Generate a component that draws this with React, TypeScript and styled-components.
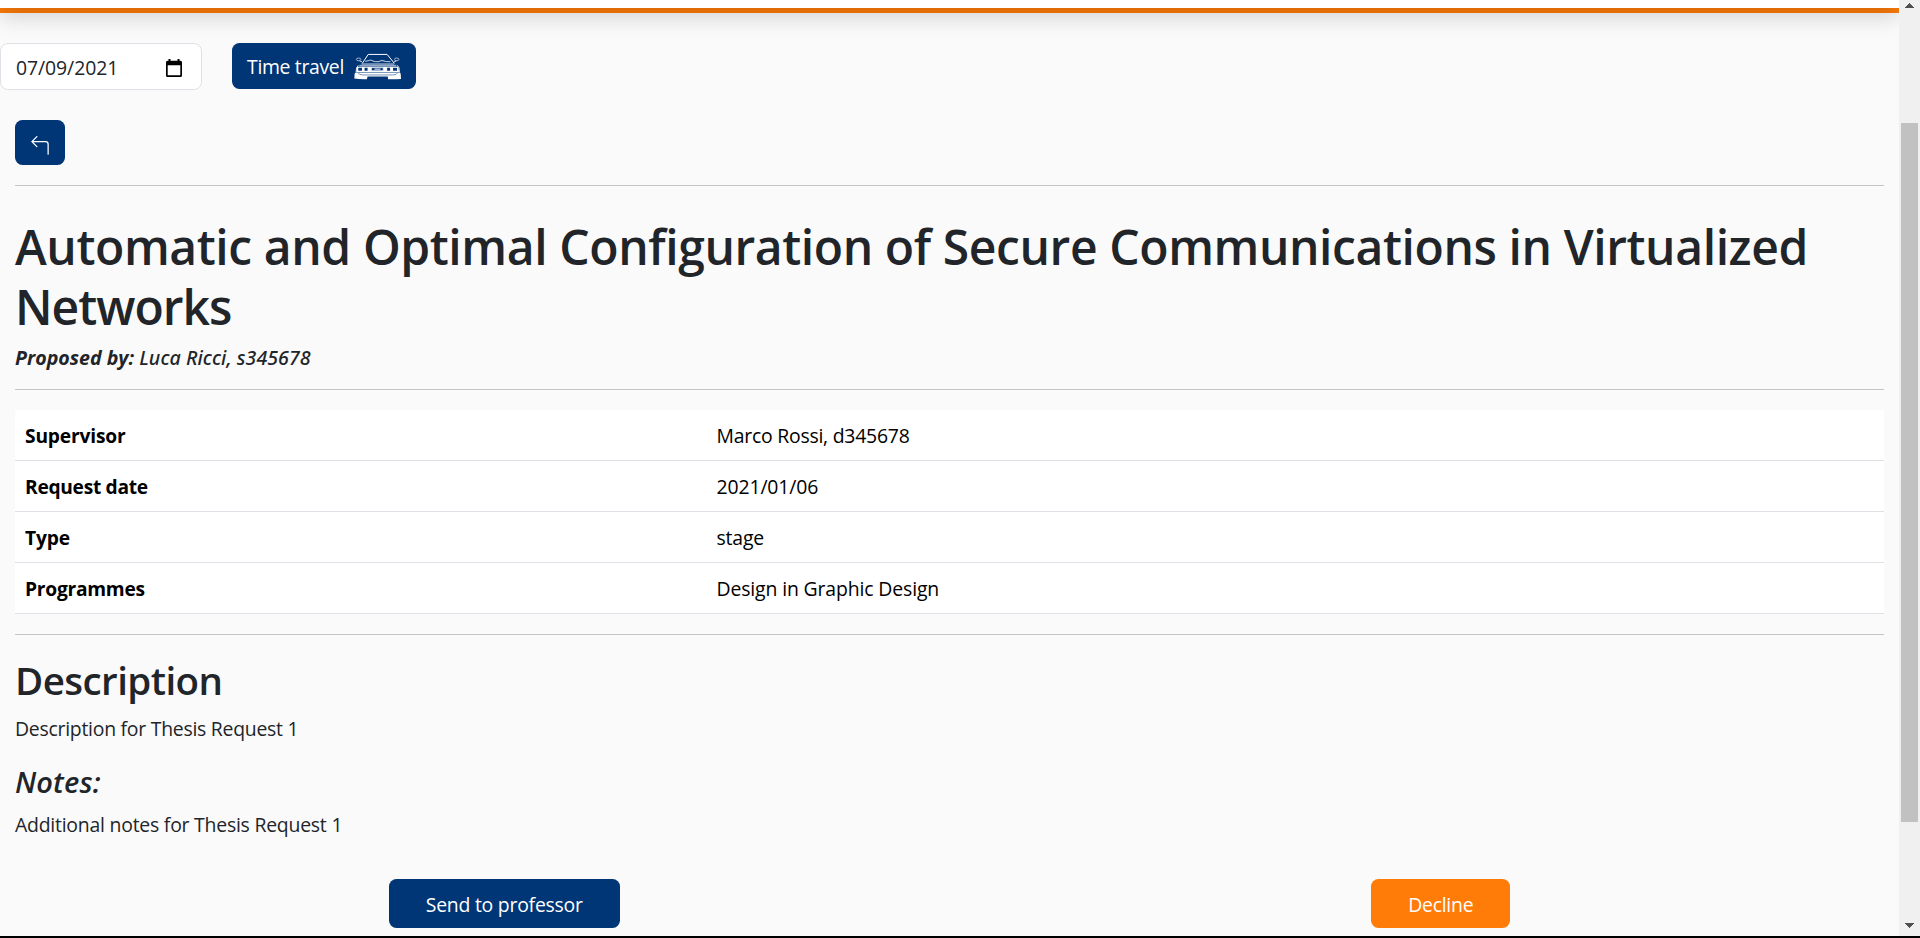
import React from "react";
import styled, { createGlobalStyle } from "styled-components";
import { BsArrow90DegLeft } from "react-icons/bs";

const NAVY = "#003576";
const ORANGE = "#ff7c08";

const GlobalStyle = createGlobalStyle`
  *, *::before, *::after { box-sizing: border-box; }
  body {
    margin: 0;
    overflow: hidden;
    background: #fafafa;
    color: #212529;
    font-family: "Open Sans", "Noto Sans", sans-serif;
    font-size: 19.4px;
    line-height: 31px;
  }
`;

const Window = styled.div`
  display: flex;
  height: 938px;
  overflow: hidden;
  border-bottom: 2px solid #000;
`;

const Page = styled.div`
  flex: 1;
  min-width: 0;
  overflow: hidden;
`;

const Header = styled.header`
  position: relative;
  z-index: 1;
  height: 80px;
  margin-top: -72px;
  background: #fff;
  box-shadow: 0 10px 20px rgba(0, 0, 0, 0.15);
`;

const Stripe = styled.div`
  height: 5px;
  background: ${ORANGE};
`;

const Toolbar = styled.div`
  display: flex;
  align-items: flex-start;
  gap: 30px;
  margin-top: 30px;
`;

const DateField = styled.div`
  display: flex;
  align-items: center;
  justify-content: space-between;
  width: 202px;
  height: 47px;
  padding: 2px 19px 0 15px;
  border: 1px solid #dee2e6;
  border-radius: 8px;
  background: #fff;
`;

const Button = styled.button<{ $tone?: string; $pad?: string; $width: number; $height: number }>`
  display: flex;
  align-items: center;
  justify-content: center;
  width: ${(p) => p.$width}px;
  height: ${(p) => p.$height}px;
  padding: ${(p) => p.$pad ?? "1px 0 0"};
  border: 0;
  border-radius: 7.5px;
  background: ${(p) => p.$tone ?? NAVY};
  color: #fff;
  font: inherit;
  white-space: nowrap;
`;

const Text = styled.span<{ $track?: number }>`
  letter-spacing: ${(p) => p.$track ?? 0}px;
  white-space: nowrap;
`;

const Content = styled.main`
  padding: 30px 15px 0;
`;

const Rule = styled.hr<{ $gap: number }>`
  height: 1px;
  margin: ${(p) => p.$gap}px 0 0;
  border: 0;
  background: #c4c5c6;
`;

const Title = styled.h1`
  margin: 30.5px 0 0;
  font-size: 48px;
  font-weight: 600;
  line-height: 60px;
`;

const TitleLine = styled(Text)`
  display: block;
`;

const Proposer = styled.p`
  margin: 5.5px 0 0;
  font-size: 19.6px;
  font-style: italic;
`;

const ProposerName = styled(Text)`
  font-family: "Noto Sans", sans-serif;
  font-weight: 500;
`;

const Details = styled.dl`
  margin: 20px 0 0;
  background: #fff;
  color: #000;
`;

const DetailRow = styled.div`
  display: grid;
  grid-template-columns: 37% 1fr;
  height: 51px;
  padding-top: 10px;
  border-bottom: 1px solid #dee2e6;
`;

const Label = styled.dt`
  padding-left: 10px;
  font-size: 19.2px;
  font-weight: 700;
`;

const Value = styled.dd`
  margin: 0;
  padding-left: 10px;
`;

const SectionTitle = styled.h2`
  margin: 19px 0 0;
  font-size: 38.5px;
  font-weight: 600;
  line-height: 52px;
`;

const NotesTitle = styled.h4`
  margin: 18px 0 0;
  font-size: 29px;
  font-style: italic;
  font-weight: 600;
  line-height: 39px;
`;

const Paragraph = styled.p<{ $gap: number }>`
  margin: ${(p) => p.$gap}px 0 0;
`;

const Actions = styled.div`
  display: flex;
  justify-content: space-around;
  margin: 39px -2px 0;
`;

const Scrollbar = styled.aside`
  display: flex;
  flex-direction: column;
  align-items: center;
  width: 21px;
  padding: 3px 0 8px;
  background: #f0f0f0;
`;

const Thumb = styled.div`
  width: 17px;
  height: 699px;
  margin: 115px 0 auto;
  background: #c1c1c1;
`;

const Arrow = ({ down }: { down?: boolean }) => (
  <svg width="9" height="5" viewBox="0 0 9 5" fill="#505050" shapeRendering="crispEdges">
    <path d={down ? "M0 0h9L4.5 5z" : "M4.5 0L9 5H0z"} />
  </svg>
);

const CalendarIcon = () => (
  <svg width="16" height="18" viewBox="0 0 16 18">
    <path
      fill="#000"
      fillRule="evenodd"
      d="M2.5 0h2v1.7h7V0h2v1.7h1Q16 1.7 16 3.2v13.2Q16 18 14.5 18h-13Q0 18 0 16.4V3.2Q0 1.7 1.5 1.7h1zM1.7 6.2v10.1h12.6V6.2z"
    />
  </svg>
);

const CarIcon = () => (
  <svg width="47" height="27" viewBox="11 16 142 81" fill="none" stroke="#fff" strokeWidth="3">
    <path d="M36 47L54 20h57l22 27" />
    <path d="M35 42l-7-2M132 42l7-2" strokeWidth="2.4" />
    <ellipse cx="25" cy="35" rx="7" ry="4" stroke="#c5d1e1" strokeWidth="2.4" />
    <ellipse cx="140" cy="35" rx="7" ry="4" stroke="#c5d1e1" strokeWidth="2.4" />
    <path d="M45 41l17-4 9 4 14 1 10-4 10 3 16 1" stroke="#a9bbd3" strokeWidth="3.5" />
    <path d="M34 49h98" strokeWidth="2.5" />
    <path d="M27 54h112" stroke="#8fa6c6" strokeWidth="5" />
    <path d="M24 53l-5 7-2 15M142 53l5 7 2 15" strokeWidth="2.5" />
    <path
      fill="#fff"
      stroke="none"
      fillRule="evenodd"
      d="M20 57h125l2 16H18zM24 60v9h11v-9zM43 60v9h9v-9zM111 60v9h9v-9zM129 60v9h12v-9z"
    />
    <path d="M64 60h35v9H64z" fill={NAVY} stroke="#dce5f0" strokeWidth="2" />
    <path d="M73 64.5h18" />
    <path fill="#fff" stroke="none" d="M18 75h129l5 3 1 16q-20 2-39 1l-1-8H52l-2 8q-20 1-38-2l1-15z" />
    <path d="M24 76q1 5 12 6h92q12 0 14-6" stroke={NAVY} strokeWidth="1.6" />
  </svg>
);

const TravelLabel = styled(Text)`
  margin-right: 10px;
`;

const details: { label: string; value: string; labelTrack: number; valueTrack: number }[] = [
  { label: "Supervisor", value: "Marco Rossi, d345678", labelTrack: -0.17, valueTrack: -0.23 },
  { label: "Request date", value: "2021/01/06", labelTrack: -0.29, valueTrack: -0.12 },
  { label: "Type", value: "stage", labelTrack: -0.18, valueTrack: -0.15 },
  { label: "Programmes", value: "Design in Graphic Design", labelTrack: -0.25, valueTrack: -0.13 },
];

export default function App() {
  return (
    <>
      <GlobalStyle />
      <Window>
        <Page>
          <Header />
          <Stripe />
          <Toolbar>
            <DateField>
              <Text $track={-0.07}>07/09/2021</Text>
              <CalendarIcon />
            </DateField>
            <Button $width={184} $height={46} $pad="0">
              <TravelLabel $track={-0.33}>Time travel</TravelLabel>
              <CarIcon />
            </Button>
          </Toolbar>
          <Content>
            <Button $width={50} $height={45} $pad="7px 0 0" aria-label="Back">
              <BsArrow90DegLeft size={20} />
            </Button>
            <Rule $gap={20} />
            <Title>
              <TitleLine $track={-0.4}>
                Automatic and Optimal Configuration of Secure Communications in Virtualized
              </TitleLine>
              <TitleLine $track={-1}>Networks</TitleLine>
            </Title>
            <Proposer>
              <b>Proposed by:</b> <ProposerName $track={0.05}>Luca Ricci, s345678</ProposerName>
            </Proposer>
            <Rule $gap={16} />
            <Details>
              {details.map((d) => (
                <DetailRow key={d.label}>
                  <Label>
                    <Text $track={d.labelTrack}>{d.label}</Text>
                  </Label>
                  <Value>
                    <Text $track={d.valueTrack}>{d.value}</Text>
                  </Value>
                </DetailRow>
              ))}
            </Details>
            <Rule $gap={20} />
            <SectionTitle>
              <Text $track={-0.55}>Description</Text>
            </SectionTitle>
            <Paragraph $gap={7}>
              <Text $track={-0.25}>Description for Thesis Request 1</Text>
            </Paragraph>
            <NotesTitle>
              <Text $track={0.15}>Notes:</Text>
            </NotesTitle>
            <Paragraph $gap={8}>
              <Text $track={-0.22}>Additional notes for Thesis Request 1</Text>
            </Paragraph>
            <Actions>
              <Button $width={231} $height={49} $pad="2px 0 0">
                <Text $track={-0.23}>Send to professor</Text>
              </Button>
              <Button $width={139} $height={49} $pad="2px 0 0" $tone={ORANGE}>
                <Text $track={-0.23}>Decline</Text>
              </Button>
            </Actions>
          </Content>
        </Page>
        <Scrollbar>
          <Arrow />
          <Thumb />
          <Arrow down />
        </Scrollbar>
      </Window>
    </>
  );
}
